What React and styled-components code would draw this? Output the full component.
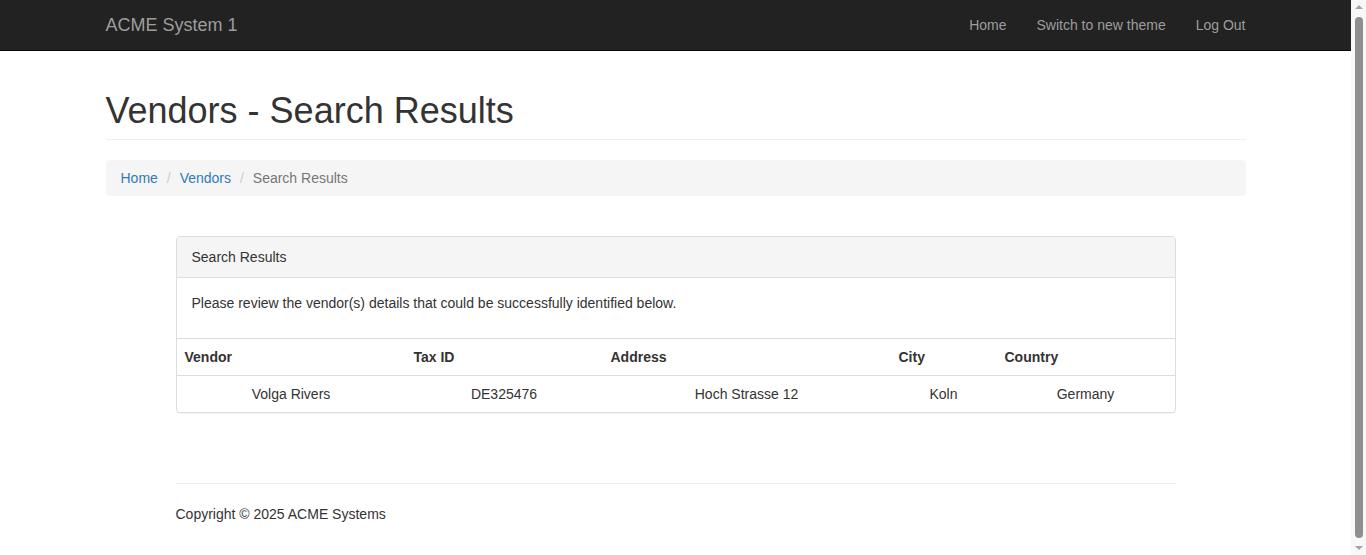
import React from "react";
import styled, { createGlobalStyle } from "styled-components";

const GlobalStyle = createGlobalStyle`
  * { box-sizing: border-box; }
  html, body { margin: 0; padding: 0; }
  body {
    font-family: "Liberation Sans", Arial, Helvetica, sans-serif;
    font-size: 14px;
    line-height: 1.42857143;
    color: #333;
    background: #fff;
    padding-right: 15px;
  }
`;

const Navbar = styled.nav`
  background: #222;
  border-bottom: 1px solid #080808;
  height: 51px;
`;

const NavInner = styled.div`
  width: 1170px;
  margin: 0 auto;
  padding: 0 15px;
  display: flex;
  justify-content: space-between;
  align-items: stretch;
  height: 50px;
`;

const Brand = styled.a`
  font-size: 18px;
  line-height: 20px;
  padding: 15px;
  margin-left: -15px;
  color: #9d9d9d;
  text-decoration: none;
`;

const NavList = styled.ul`
  list-style: none;
  margin: 0 -15px 0 0;
  padding: 0;
  display: flex;
`;

const NavLink = styled.a`
  display: block;
  padding: 15px;
  line-height: 20px;
  color: #9d9d9d;
  text-decoration: none;
`;

const Container = styled.div`
  width: 1170px;
  margin: 0 auto;
  padding: 0 15px;
`;

const PageTitle = styled.h1`
  font-size: 36px;
  font-weight: 500;
  line-height: 39px;
  margin: 40px 0 20px;
  padding-bottom: 9px;
  border-bottom: 1px solid #eee;
  color: #333;
`;

const Breadcrumb = styled.ol`
  list-style: none;
  margin: 0 0 20px;
  padding: 8px 15px;
  background: #f5f5f5;
  border-radius: 4px;
  display: flex;
  & > li + li {
    margin-left: 4px;
  }
  & > li + li::before {
    content: "/\\00a0";
    padding: 0 5px;
    color: #ccc;
  }
`;

const Crumb = styled.li`
  color: ${(p) => (p.$active ? "#777" : "#337ab7")};
`;

const CrumbLink = styled.a`
  color: #337ab7;
  text-decoration: none;
`;

const Content = styled.div`
  width: 1000px;
  margin: 0 auto;
  padding: 20px 0 36px;
`;

const Panel = styled.div`
  border: 1px solid #ddd;
  border-radius: 4px;
  box-shadow: 0 1px 1px rgba(0, 0, 0, 0.05);
  overflow: hidden;
`;

const PanelHeading = styled.div`
  padding: 10px 15px;
  background: #f5f5f5;
  border-bottom: 1px solid #ddd;
  color: #333;
`;

const PanelBody = styled.div`
  padding: 15px;
  p { margin: 0 0 10px; }
`;

const Table = styled.table`
  width: 100%;
  border-collapse: collapse;
  table-layout: fixed;
  border-top: 1px solid #ddd;
`;

const Th = styled.th`
  text-align: left;
  font-weight: bold;
  padding: 8px;
  line-height: 20px;
  border-bottom: 1px solid #ddd;
`;

const Td = styled.td`
  text-align: center;
  padding: 8px;
  line-height: 20px;
`;

const Rule = styled.hr`
  border: 0;
  border-top: 1px solid #eee;
  margin: 70px 0 20px;
`;

const FooterText = styled.p`
  margin: 0 0 10px;
`;

/* imitation of the browser's vertical scrollbar seen in the screenshot */
const ScrollTrack = styled.div`
  position: fixed;
  top: 0;
  right: 0;
  width: 15px;
  height: 100vh;
  background: #f8f8f8;
  display: flex;
  flex-direction: column;
  align-items: center;
  justify-content: space-between;
  padding: 5px 0;
`;

const Arrow = styled.span`
  width: 0;
  height: 0;
  border-left: 4px solid transparent;
  border-right: 4px solid transparent;
  ${(p) =>
    p.$down
      ? "border-top: 4px solid #a3a3a3;"
      : "border-bottom: 4px solid #a3a3a3;"}
`;

const Thumb = styled.span`
  flex: 1;
  width: 8px;
  margin: 8px 0;
  border-radius: 4px;
  background: #8f8f8f;
`;

const columns = [
  { label: "Vendor", width: 229 },
  { label: "Tax ID", width: 197 },
  { label: "Address", width: 288 },
  { label: "City", width: 106 },
  { label: "Country", width: 178 },
];

const rows = [["Volga Rivers", "DE325476", "Hoch Strasse 12", "Koln", "Germany"]];

export default function App() {
  return (
    <>
      <GlobalStyle />
      <Navbar>
        <NavInner>
          <Brand href="#">ACME System 1</Brand>
          <NavList>
            <li><NavLink href="#">Home</NavLink></li>
            <li><NavLink href="#">Switch to new theme</NavLink></li>
            <li><NavLink href="#">Log Out</NavLink></li>
          </NavList>
        </NavInner>
      </Navbar>
      <Container>
        <PageTitle>Vendors - Search Results</PageTitle>
        <Breadcrumb>
          <Crumb><CrumbLink href="#">Home</CrumbLink></Crumb>
          <Crumb><CrumbLink href="#">Vendors</CrumbLink></Crumb>
          <Crumb $active>Search Results</Crumb>
        </Breadcrumb>
      </Container>
      <Content>
        <Panel>
          <PanelHeading>Search Results</PanelHeading>
          <PanelBody>
            <p>Please review the vendor(s) details that could be successfully identified below.</p>
          </PanelBody>
          <Table>
            <colgroup>
              {columns.map((c) => (
                <col key={c.label} style={{ width: c.width }} />
              ))}
            </colgroup>
            <thead>
              <tr>
                {columns.map((c) => (
                  <Th key={c.label}>{c.label}</Th>
                ))}
              </tr>
            </thead>
            <tbody>
              {rows.map((r, i) => (
                <tr key={i}>
                  {r.map((v, j) => (
                    <Td key={j}>{v}</Td>
                  ))}
                </tr>
              ))}
            </tbody>
          </Table>
        </Panel>
        <Rule />
        <FooterText>Copyright © 2025 ACME Systems</FooterText>
      </Content>
      <ScrollTrack aria-hidden="true">
        <Arrow />
        <Thumb />
        <Arrow $down />
      </ScrollTrack>
    </>
  );
}
